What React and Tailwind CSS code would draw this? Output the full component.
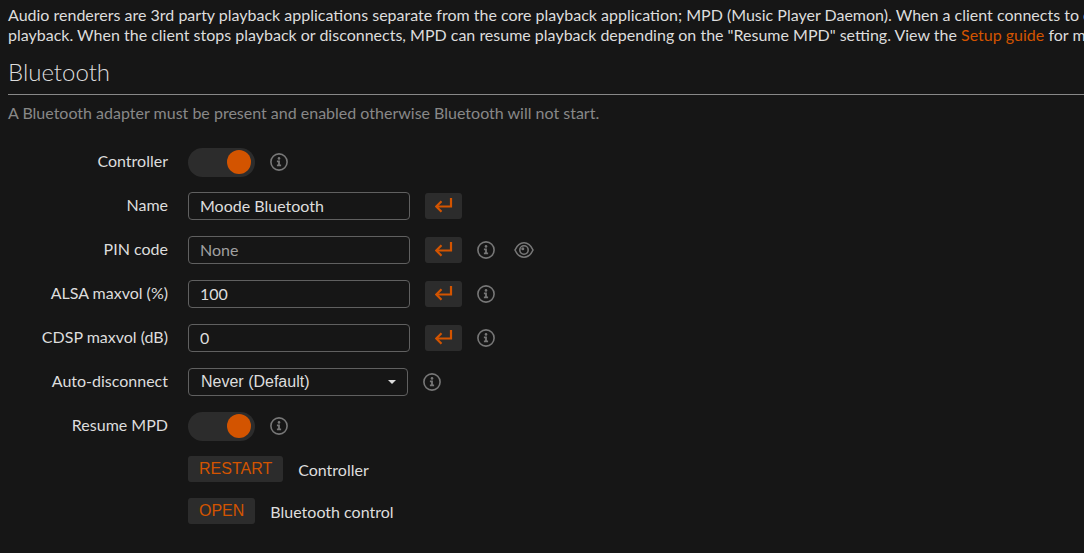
import React, { useState } from 'react';

const InfoIcon = () => (
  <svg viewBox="0 0 18 18" className="h-[18px] w-[18px]" fill="none" aria-hidden="true">
    <circle cx="9" cy="9" r="8.1" stroke="currentColor" strokeWidth="1.6" />
    <circle cx="9" cy="5.4" r="1.3" fill="currentColor" />
    <path d="M6.9 7.6h3v4h1.2v1.6H6.9v-1.6h1.2V9.2H6.9z" fill="currentColor" />
  </svg>
);

const EyeIcon = () => (
  <svg viewBox="0 0 20 18" className="h-[18px] w-5" fill="none" stroke="currentColor" strokeWidth="1.6" aria-hidden="true">
    <path d="M1 9c2-4.400 5.200-7.200 9-7.200S17 4.600 19 9c-2 4.400-5.200 7.200-9 7.200S3 13.400 1 9z" />
    <circle cx="10" cy="9" r="4.2" />
    <circle cx="8.800" cy="7.800" r="1.5" fill="currentColor" stroke="none" />
  </svg>
);

const EnterIcon = () => (
  <svg viewBox="0 0 18 16" className="h-4 w-[18px]" fill="none" stroke="currentColor" strokeWidth="2.2" aria-hidden="true">
    <path d="M16 1v8.500H2" />
    <path d="M6.500 4.300L1.300 9.500l5.200 5.200" />
  </svg>
);

const IconButton = ({ label, children }) => (
  <button type="button" aria-label={label} className="flex items-center justify-center text-[#777777]">
    {children}
  </button>
);

const Row = ({ id, label, children }) => (
  <div className="flex h-7 items-center">
    <label htmlFor={id} className="mr-5 w-40 shrink-0 pb-0.5 text-right">
      {label}
    </label>
    <div className="flex items-center gap-[15px]">{children}</div>
  </div>
);

const Toggle = ({ id }) => {
  const [on, setOn] = useState(true);

  return (
    <label className="flex cursor-pointer">
      <input
        id={id}
        type="checkbox"
        checked={on}
        onChange={() => setOn(!on)}
        className="peer sr-only"
      />
      <span className="flex h-[29px] w-[67px] items-center rounded-full bg-[#2c2c2c] px-1 peer-checked:justify-end">
        <span className="h-6 w-6 rounded-full bg-[#d35400]" />
      </span>
    </label>
  );
};

const TextSetting = ({ id, value = '', placeholder }) => {
  const [text, setText] = useState(value);

  return (
    <>
      <input
        id={id}
        type="text"
        value={text}
        placeholder={placeholder}
        onChange={(e) => setText(e.target.value)}
        className="h-7 w-[222px] rounded border border-[#606060] bg-transparent px-[11px] pb-0.5 text-base placeholder:text-[#a0a0a0] focus:outline-none"
      />
      <button
        type="submit"
        aria-label="Set"
        className="flex h-[26px] w-[37px] items-center justify-center rounded-[3px] bg-[#2c2c2c] pb-0.5 text-[#d35400]"
      >
        <EnterIcon />
      </button>
    </>
  );
};

const ActionButton = ({ id, children }) => (
  <button
    id={id}
    type="button"
    className="h-[26px] rounded-[3px] bg-[#2c2c2c] px-[11px] font-['Liberation_Sans',sans-serif] text-base leading-6 text-[#d35400]"
  >
    {children}
  </button>
);

const App = () => (
  <main className="min-h-screen overflow-hidden bg-[#161616] pb-6 pl-2 font-[Lato,sans-serif] text-base leading-5 text-[#dddddd]">
    <p className="whitespace-nowrap pt-[5px]">
      Audio renderers are 3rd party playback applications separate from the core playback application; MPD (Music Player Daemon). When a client connects to o
      <br />
      playback. When the client stops playback or disconnects, MPD can resume playback depending on the "Resume MPD" setting. View the{' '}
      <a href="#setup-guide" className="text-[#d35400]">Setup guide</a> for mor
    </p>

    <h1 className="mt-[11px] border-b border-[#888888] pb-1.5 text-2xl leading-8 font-light">Bluetooth</h1>
    <p className="mt-2 text-[#888888]">
      A Bluetooth adapter must be present and enabled otherwise Bluetooth will not start.
    </p>

    <form className="mt-[25px] flex flex-col gap-4" onSubmit={(e) => e.preventDefault()}>
      <Row id="controller" label="Controller">
        <Toggle id="controller" />
        <IconButton label="About the controller"><InfoIcon /></IconButton>
      </Row>
      <Row id="name" label="Name">
        <TextSetting id="name" value="Moode Bluetooth" />
      </Row>
      <Row id="pin" label="PIN code">
        <TextSetting id="pin" placeholder="None" />
        <IconButton label="About the PIN code"><InfoIcon /></IconButton>
        <div className="ml-1 flex">
          <IconButton label="Show PIN code"><EyeIcon /></IconButton>
        </div>
      </Row>
      <Row id="alsa" label="ALSA maxvol (%)">
        <TextSetting id="alsa" value="100" />
        <IconButton label="About ALSA maxvol"><InfoIcon /></IconButton>
      </Row>
      <Row id="cdsp" label="CDSP maxvol (dB)">
        <TextSetting id="cdsp" value="0" />
        <IconButton label="About CDSP maxvol"><InfoIcon /></IconButton>
      </Row>
      <Row id="disconnect" label="Auto-disconnect">
        <div className="relative">
          <select
            id="disconnect"
            className="block h-7 w-[220px] appearance-none rounded border border-[#606060] bg-[#161616] px-3 font-['Liberation_Sans',sans-serif] text-base focus:outline-none"
          >
            <option>Never (Default)</option>
          </select>
          <svg viewBox="0 0 8 4" className="pointer-events-none absolute top-3 right-3 h-1 w-2" fill="currentColor" aria-hidden="true">
            <path d="M0 0h8L4 4z" />
          </svg>
        </div>
        <IconButton label="About auto-disconnect"><InfoIcon /></IconButton>
      </Row>
      <Row id="resume" label="Resume MPD">
        <Toggle id="resume" />
        <IconButton label="About resume MPD"><InfoIcon /></IconButton>
      </Row>

      <div className="flex flex-col gap-4 pl-[180px]">
        <div className="flex items-center gap-[15px]">
          <ActionButton id="restart">RESTART</ActionButton>
          <label htmlFor="restart" className="pt-0.5">Controller</label>
        </div>
        <div className="flex items-center gap-[15px]">
          <ActionButton id="open">OPEN</ActionButton>
          <label htmlFor="open" className="pt-0.5">Bluetooth control</label>
        </div>
      </div>
    </form>
  </main>
);

export default App;
